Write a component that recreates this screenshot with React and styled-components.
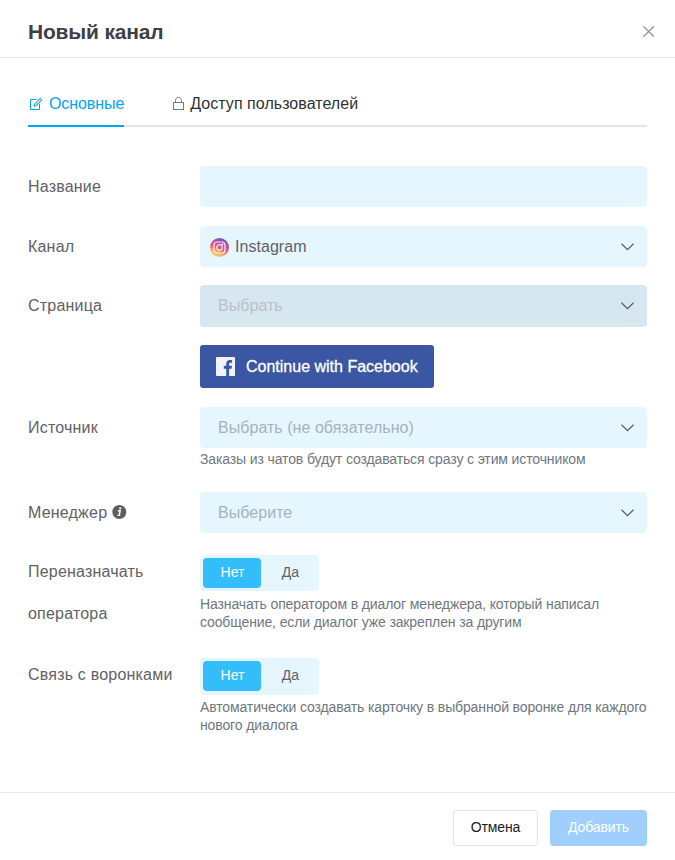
import React, { useState } from 'react';
import styled, { createGlobalStyle } from 'styled-components';

const GlobalStyle = createGlobalStyle`
  * {
    box-sizing: border-box;
  }

  body {
    margin: 0;
    background: #fff;
    font-family: "Liberation Sans", Arial, sans-serif;
  }

  button {
    font-family: inherit;
  }
`;

const Dialog = styled.div`
  display: flex;
  flex-direction: column;
  width: 675px;
  height: 860px;
  background: #fff;
`;

const Header = styled.header`
  display: flex;
  align-items: center;
  justify-content: space-between;
  height: 58px;
  padding: 5px 20px 0 28px;
  border-bottom: 1px solid #e8e9eb;
`;

const Title = styled.h1`
  margin: 2px 0 0;
  font-size: 21px;
  line-height: 28px;
  letter-spacing: -0.2px;
  color: #414048;
`;

const CloseButton = styled.button`
  display: flex;
  padding: 0;
  border: none;
  background: none;
  color: #909399;
  cursor: pointer;
`;

const Tabs = styled.nav`
  display: flex;
  gap: 48px;
  height: 47px;
  margin: 22px 28px 39px;
  border-bottom: 2px solid #e0e4ea;
`;

const Tab = styled.button`
  display: flex;
  align-items: center;
  height: 47px;
  padding: 2px 0 0;
  border: none;
  border-bottom: 2px solid ${({ $active }) => ($active ? '#03a5ef' : 'transparent')};
  background: none;
  color: ${({ $active }) => ($active ? '#03a5ef' : '#303133')};
  font-size: 16px;
  letter-spacing: ${({ $active }) => ($active ? '-0.08px' : '0.04px')};
  cursor: pointer;

  svg {
    margin-right: 5px;
  }
`;

const Form = styled.form`
  flex: 1;
  padding: 0 28px;
`;

const Row = styled.div`
  display: grid;
  grid-template-columns: 172px 1fr;
  height: ${({ $height }) => $height}px;
`;

const Label = styled.label`
  margin-top: ${({ $raised }) => ($raised ? -4 : 0)}px;
  color: #606266;
  font-size: 16px;
  line-height: ${({ $raised }) => ($raised ? 42 : 41)}px;
  letter-spacing: 0.2px;

  svg {
    margin-left: 0;
    vertical-align: -2px;
  }
`;

const Input = styled.input`
  display: block;
  width: 100%;
  height: 41px;
  padding: 0 18px;
  border: none;
  border-radius: 4px;
  background: #e5f6ff;
  font-size: 16px;
  outline: none;
`;

const SelectBox = styled.div`
  display: flex;
  align-items: center;
  height: ${({ $disabled }) => ($disabled ? 42 : 41)}px;
  padding: 0 13px 0 ${({ $filled }) => ($filled ? 10 : 18)}px;
  border-radius: 4px;
  background: ${({ $disabled }) => ($disabled ? '#d6e7ef' : '#e5f6ff')};
  cursor: ${({ $disabled }) => ($disabled ? 'not-allowed' : 'pointer')};
`;

const SelectText = styled.span`
  flex: 1;
  margin-left: ${({ $filled }) => ($filled ? 5 : 0)}px;
  color: ${({ $filled, $disabled }) => ($filled ? '#606266' : $disabled ? '#b9c0ca' : '#a5b2bb')};
  font-size: 16px;
  line-height: 20px;
  letter-spacing: 0.04px;
`;

const FacebookButton = styled.button`
  display: flex;
  align-items: center;
  width: 234px;
  height: 43px;
  padding: 0 16px;
  border: none;
  border-radius: 3px;
  background: #3b57a4;
  color: #fff;
  font-size: 16px;
  white-space: nowrap;
  -webkit-text-stroke: 0.3px #fff;
  cursor: pointer;

  svg {
    margin-right: 11px;
  }
`;

const Hint = styled.p`
  margin: ${({ $gap }) => $gap}px 0 0;
  color: #6f7780;
  font-size: 14px;
  line-height: 18px;
  letter-spacing: -0.125px;
`;

const Switch = styled.div`
  display: flex;
  width: 119px;
  height: ${({ $height }) => $height}px;
  padding: 3px 0 3px 3px;
  border-radius: 4px;
  background: #e5f6ff;
`;

const SwitchOption = styled.button`
  width: 58px;
  height: 30px;
  padding: 0 0 2px 1px;
  border: none;
  border-radius: 4px;
  background: ${({ $active }) => ($active ? '#33bdfb' : 'transparent')};
  color: ${({ $active }) => ($active ? '#fff' : '#606266')};
  font-size: 14px;
  cursor: pointer;
`;

const Footer = styled.footer`
  display: flex;
  justify-content: flex-end;
  gap: 12px;
  height: 68px;
  padding: 17px 28px 0;
  border-top: 1px solid #e8e9eb;
`;

const FooterButton = styled.button`
  width: ${({ $primary }) => ($primary ? 97 : 85)}px;
  height: 36px;
  padding: 0 0 2px;
  border: 1px solid ${({ $primary }) => ($primary ? '#a0cfff' : '#e0e2e8')};
  border-radius: 3px;
  background: ${({ $primary }) => ($primary ? '#a0cfff' : '#fff')};
  color: ${({ $primary }) => ($primary ? '#fff' : '#1b1b1f')};
  font-size: 14px;
  letter-spacing: -0.1px;
`;

const CloseIcon = () => (
  <svg width="13" height="13" viewBox="0 0 13 13" fill="none" stroke="currentColor" strokeWidth="1.2">
    <path d="M1.3 1.2L12 11.8M12 1.2L1.3 11.8" />
  </svg>
);

const EditIcon = () => (
  <svg width="16" height="14" viewBox="0 0 16 14" fill="none" stroke="currentColor" strokeWidth="1">
    <path d="M8.5 2.5H2.5V12.5H11.5V7" />
    <path
      d="M6 9.3L6.7 6.7L12.3 1.2L14 2.8L8.5 8.5Z"
      fill="currentColor"
      fillOpacity="0.3"
    />
  </svg>
);

const LockIcon = () => (
  <svg width="13" height="14" viewBox="0 0 13 14" fill="none" stroke="#77797d" strokeWidth="1">
    <rect x="1.5" y="5.5" width="10" height="7" />
    <path d="M3.5 5.5V3.5C3.5 1.5 4.8 0.5 6.5 0.5S9.5 1.5 9.5 3.5V5.5" />
  </svg>
);

const ChevronIcon = () => (
  <svg width="13" height="8" viewBox="0 0 13 8" fill="none" stroke="#545c64" strokeWidth="1.2">
    <path d="M0.5 0.8L6.5 6.7L12.5 0.8" />
  </svg>
);

const InfoIcon = () => (
  <svg width="15" height="15" viewBox="0 0 15 15">
    <circle cx="7.3" cy="7" r="7" fill="#5c5e62" />
    <path d="M5.9 5.8H8.2L7.1 10.4H8.3M5.5 10.4H7.2" fill="none" stroke="#fff" strokeWidth="1.4" />
    <circle cx="8.2" cy="3.4" r="1.1" fill="#fff" />
  </svg>
);

const InstagramIcon = () => (
  <svg width="20" height="20" viewBox="0 0 20 20">
    <defs>
      <linearGradient id="insta" x1="0.2" y1="1" x2="0.6" y2="0">
        <stop offset="0" stopColor="#ffd568" />
        <stop offset="0.28" stopColor="#fbae5c" />
        <stop offset="0.5" stopColor="#e8577d" />
        <stop offset="0.75" stopColor="#b94aa8" />
        <stop offset="1" stopColor="#6a55d0" />
      </linearGradient>
    </defs>
    <circle cx="9.5" cy="10.5" r="9.5" fill="url(#insta)" />
    <g fill="none" stroke="#fff" strokeOpacity="0.9" strokeWidth="1.2">
      <rect x="4" y="5" width="11" height="11" rx="3" />
      <circle cx="9.5" cy="10.5" r="2.8" />
    </g>
    <circle cx="12.8" cy="7.3" r="0.8" fill="#fff" />
  </svg>
);

const FacebookIcon = () => (
  <svg width="19" height="19" viewBox="0 0 19 19">
    <rect width="19" height="19" rx="1" fill="#f1f3fa" />
    <path
      d="M10.2 19V11.7H7.8V8.8H10.2V6.8C10.2 4.4 11.7 3 14 3H16.1V5.7H14.7C13.5 5.7 13.1 6.3 13.1 7.3V8.8H16L15.6 11.7H13.1V19Z"
      fill="#3b57a4"
    />
  </svg>
);

const Select = ({ icon, value, placeholder, disabled }) => (
  <SelectBox $filled={!!value} $disabled={disabled}>
    {icon}
    <SelectText $filled={!!value} $disabled={disabled}>
      {value || placeholder}
    </SelectText>
    <ChevronIcon />
  </SelectBox>
);

const YesNoSwitch = ({ value, onChange, height }) => (
  <Switch $height={height}>
    <SwitchOption type="button" $active={!value} onClick={() => onChange(false)}>
      Нет
    </SwitchOption>
    <SwitchOption type="button" $active={value} onClick={() => onChange(true)}>
      Да
    </SwitchOption>
  </Switch>
);

const App = () => {
  const [tab, setTab] = useState('main');
  const [name, setName] = useState('');
  const [reassign, setReassign] = useState(false);
  const [funnels, setFunnels] = useState(false);

  return (
    <>
      <GlobalStyle />
      <Dialog>
        <Header>
          <Title>Новый канал</Title>
          <CloseButton>
            <CloseIcon />
          </CloseButton>
        </Header>

        <Tabs>
          <Tab $active={tab === 'main'} onClick={() => setTab('main')}>
            <EditIcon />
            Основные
          </Tab>
          <Tab $active={tab === 'access'} onClick={() => setTab('access')}>
            <LockIcon />
            Доступ пользователей
          </Tab>
        </Tabs>

        <Form>
          <Row $height={60}>
            <Label>Название</Label>
            <Input value={name} onChange={(e) => setName(e.target.value)} />
          </Row>
          <Row $height={59}>
            <Label>Канал</Label>
            <Select icon={<InstagramIcon />} value="Instagram" />
          </Row>
          <Row $height={60}>
            <Label>Страница</Label>
            <Select placeholder="Выбрать" disabled />
          </Row>
          <Row $height={62}>
            <span />
            <FacebookButton type="button">
              <FacebookIcon />
              Continue with Facebook
            </FacebookButton>
          </Row>
          <Row $height={85}>
            <Label>Источник</Label>
            <div>
              <Select placeholder="Выбрать (не обязательно)" />
              <Hint $gap={2}>Заказы из чатов будут создаваться сразу с этим источником</Hint>
            </div>
          </Row>
          <Row $height={63}>
            <Label>
              Менеджер <InfoIcon />
            </Label>
            <Select placeholder="Выберите" />
          </Row>
          <Row $height={103}>
            <Label $raised>Переназначать оператора</Label>
            <div>
              <YesNoSwitch value={reassign} onChange={setReassign} height={36} />
              <Hint $gap={4}>
                Назначать оператором в диалог менеджера, который написал сообщение, если диалог уже
                закреплен за другим
              </Hint>
            </div>
          </Row>
          <Row $height={103}>
            <Label $raised>Связь с воронками</Label>
            <div>
              <YesNoSwitch value={funnels} onChange={setFunnels} height={37} />
              <Hint $gap={3}>
                Автоматически создавать карточку в выбранной воронке для каждого нового диалога
              </Hint>
            </div>
          </Row>
        </Form>

        <Footer>
          <FooterButton>Отмена</FooterButton>
          <FooterButton $primary>Добавить</FooterButton>
        </Footer>
      </Dialog>
    </>
  );
};

export default App;
